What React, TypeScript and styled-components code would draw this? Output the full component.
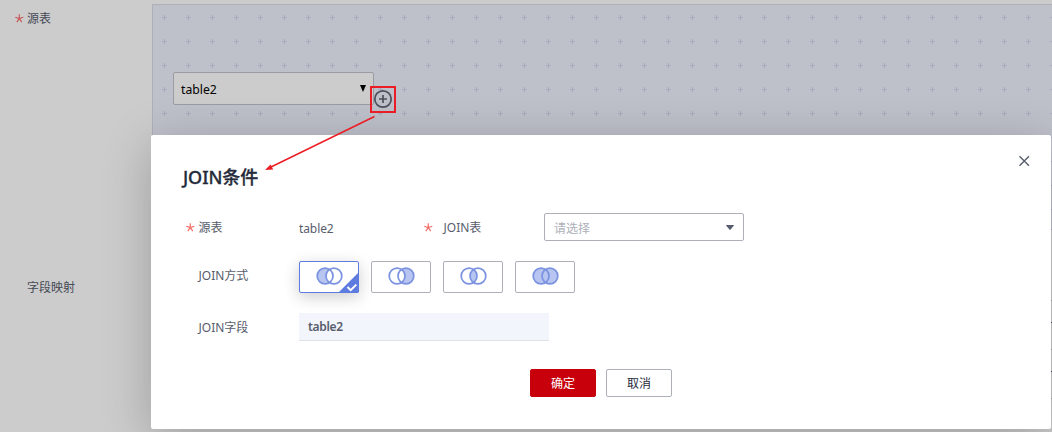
import React from 'react';
import styled, { createGlobalStyle, css } from 'styled-components';

const GlobalStyle = createGlobalStyle`
  * { box-sizing: border-box; }
  html, body { margin: 0; height: 432px; overflow: hidden; }
  body {
    background: #cccccc;
    font-family: 'Noto Sans', 'Noto Sans CJK SC', sans-serif;
    font-size: 12px;
    color: #575d6c;
  }
  button { font: inherit; }
`;

const Page = styled.div`
  position: relative;
  width: 1052px;
  height: 432px;
  overflow: hidden;
`;

const PageRow = styled.section<{ $height: number }>`
  display: grid;
  grid-template-columns: 152px 1fr;
  height: ${p => p.$height}px;
`;

const PageLabel = styled.div<{ $top: number; $left?: number }>`
  display: flex;
  padding: ${p => p.$top}px 0 0 ${p => p.$left ?? 15}px;
  line-height: 18px;
  color: #464a56;
`;

const Star = styled.span<{ $dim?: boolean }>`
  flex: none;
  display: flex;
  align-items: center;
  width: 12px;
  height: 17px;
  color: ${p => (p.$dim ? '#c85a5a' : '#f66f6a')};
`;

const Canvas = styled.div`
  position: relative;
  margin-top: 4px;
  border: 1px solid #adb0b7;
  border-right: 0;
  background: #bec1ca;
  overflow: hidden;
`;

const Grid = styled.svg`
  position: absolute;
  inset: 0;
  width: 100%;
  height: 100%;
`;

const TableNode = styled.div`
  position: absolute;
  left: 20px;
  top: 67px;
  display: flex;
  align-items: center;
  justify-content: space-between;
  width: 201px;
  height: 33px;
  padding: 2px 7px 0 7px;
  border: 1px solid #9a9ca5;
  border-radius: 2px;
  background: #cccccc;
  color: #000;
  font-size: 12.2px;

  svg { margin-top: -2px; }
`;

const AddButton = styled.svg`
  position: absolute;
  left: 220px;
  top: 84px;
`;

const MappingTable = styled.div`
  display: grid;
  grid-auto-rows: 49px;
  align-content: start;
  padding-top: 22px;
`;

const MappingRow = styled.div<{ $marked?: boolean }>`
  display: flex;
  justify-content: flex-end;
  border-bottom: 1px solid #a4a4a4;
  &::after {
    content: '';
    width: 1px;
    height: 1px;
    margin-top: 21px;
    background: ${p => (p.$marked ? '#464a56' : 'transparent')};
  }
`;

const Dialog = styled.div`
  position: absolute;
  left: 151px;
  top: 135px;
  width: 900px;
  height: 294px;
  padding: 29px 31px 0;
  border-radius: 2px;
  background: #fff;
  box-shadow: 0 10px 50px rgba(0, 0, 0, 0.23);
`;

const Header = styled.header`
  display: flex;
  justify-content: space-between;
  height: 49px;
`;

const Title = styled.h2`
  margin: 0 0 0 1px;
  font-size: 18px;
  line-height: 26px;
  letter-spacing: -0.1px;
  font-weight: 500;
  color: #252b3a;
  -webkit-text-stroke: 0.3px currentColor;
`;

const Close = styled.button`
  width: 12px;
  height: 12px;
  margin: -9px -10px 0 0;
  padding: 0;
  border: 0;
  background: none;
  svg { display: block; }
`;

const FormRow = styled.div<{ $height: number }>`
  display: flex;
  align-items: flex-start;
  height: ${p => p.$height}px;
`;

const Label = styled.div<{ $width: number; $gap?: number }>`
  display: flex;
  gap: ${p => p.$gap ?? 0.5}px;
  flex: none;
  width: ${p => p.$width}px;
  padding: 6px 0 0 4px;
  line-height: 18px;
`;

const Value = styled.div`
  width: 121px;
  padding-top: 7px;
  line-height: 18px;
  letter-spacing: -0.1px;
`;

const Select = styled.div`
  display: flex;
  align-items: center;
  justify-content: space-between;
  width: 200px;
  height: 28px;
  padding: 1px 9px 0;
  border: 1px solid #adb0b8;
  border-radius: 2px;
  color: #adb0b8;
`;

const Options = styled.div`
  display: flex;
  gap: 12px;
`;

const Option = styled.button<{ $selected?: boolean }>`
  position: relative;
  display: flex;
  justify-content: center;
  width: 60px;
  height: 32px;
  padding: 4px 0 0;
  border: 1px solid #adb0b8;
  border-radius: 2px;
  background: #fff;
  ${p => p.$selected && css`
    border-color: #5e7ce0;
    box-shadow: 0 4px 16px rgba(0, 0, 0, 0.2);
  `}
`;

const Tick = styled.svg`
  position: absolute;
  right: -1px;
  bottom: -1px;
`;

const Field = styled.div`
  width: 250px;
  height: 28px;
  padding-left: 9px;
  border-bottom: 1px solid #dfe1e6;
  background: #f2f5fc;
  font-weight: 600;
  letter-spacing: -0.3px;
  line-height: 28px;
`;

const Footer = styled.footer`
  display: flex;
  justify-content: center;
  gap: 10px;
`;

const Button = styled.button<{ $primary?: boolean }>`
  width: 66px;
  height: 28px;
  padding: 0;
  border: 1px solid ${p => (p.$primary ? '#c7000b' : '#adb0b8')};
  border-radius: 2px;
  background: ${p => (p.$primary ? '#c7000b' : '#fff')};
  color: ${p => (p.$primary ? '#fff' : '#252b3a')};
`;

const Annotation = styled.svg`
  position: absolute;
  left: 0;
  top: 0;
  pointer-events: none;
`;

function Required({ dim }: { dim?: boolean }) {
  return (
    <Star $dim={dim}>
      <svg width="9" height="9" viewBox="0 0 9 9" fill="none" stroke="currentColor" strokeWidth="1.2">
        <path d="M4.3 0.3V4.6M0.3 3.3L4.3 4.6L8.3 3.3M1.8 8.2L4.3 4.6L6.8 8.2" />
      </svg>
    </Star>
  );
}

type Join = 'left' | 'right' | 'inner' | 'full';

function JoinIcon({ kind }: { kind: Join }) {
  const fill = '#b7c5f0';
  const lens = 'M13.5 3.44A7.9 7.9 0 0 1 13.5 16.56A7.9 7.9 0 0 1 13.5 3.44Z';
  return (
    <svg width="27" height="20" viewBox="0 0 27 20" fill="none">
      {(kind === 'left' || kind === 'full') && <circle cx="9.1" cy="10" r="7.9" fill={fill} />}
      {(kind === 'right' || kind === 'full') && <circle cx="17.9" cy="10" r="7.9" fill={fill} />}
      {(kind === 'left' || kind === 'right') && <path d={lens} fill="#fff" />}
      {kind === 'inner' && <path d={lens} fill={fill} />}
      <g stroke="#7b92e0" strokeWidth="1.7">
        <circle cx="9.1" cy="10" r="7.9" />
        <circle cx="17.9" cy="10" r="7.9" />
      </g>
    </svg>
  );
}

const joins: Join[] = ['left', 'right', 'inner', 'full'];

export default function App() {
  return (
    <>
      <GlobalStyle />
      <Page>
        <PageRow $height={230}>
          <PageLabel $top={10}>
            <Required dim />
            源表
          </PageLabel>
          <Canvas>
            <Grid>
              <defs>
                <pattern id="plus" width="24" height="24" patternUnits="userSpaceOnUse">
                  <path d="M9 12.5H14M11.5 10V15" stroke="#a8abbd" />
                </pattern>
              </defs>
              <rect width="100%" height="100%" fill="url(#plus)" />
            </Grid>
            <TableNode>
              table2
              <svg width="6" height="7" viewBox="0 0 6 7">
                <path d="M0 0H6L3 7Z" fill="#000" />
              </svg>
            </TableNode>
            <AddButton width="20" height="20" viewBox="0 0 20 20" fill="none" stroke="#4c505c" strokeWidth="1.7">
              <circle cx="10" cy="10" r="8.2" />
              <path d="M6 10H14M10 6V14" />
            </AddButton>
          </Canvas>
        </PageRow>
        <PageRow $height={202}>
          <PageLabel $top={49} $left={27}>字段映射</PageLabel>
          <MappingTable>
            <MappingRow />
            <MappingRow $marked />
            <MappingRow $marked />
          </MappingTable>
        </PageRow>

        <Dialog role="dialog">
          <Header>
            <Title>JOIN条件</Title>
            <Close aria-label="close">
              <svg width="12" height="12" viewBox="0 0 12 12" fill="none" stroke="#575d6c" strokeWidth="1.4">
                <path d="M1.5 1.3L11 10.7M11 1.3L1.5 10.7" />
              </svg>
            </Close>
          </Header>
          <FormRow $height={48}>
            <Label $width={117}>
              <Required />
              源表
            </Label>
            <Value>table2</Value>
            <Label $width={124} $gap={7.5}>
              <Required />
              JOIN表
            </Label>
            <Select>
              请选择
              <svg width="8" height="5" viewBox="0 0 8 5">
                <path d="M0.5 0H7.5Q8.2 0 7.7 0.7L4.6 4.6Q4 5.2 3.4 4.6L0.3 0.7Q-0.2 0 0.5 0Z" fill="#575d6c" />
              </svg>
            </Select>
          </FormRow>
          <FormRow $height={52}>
            <Label $width={117}>
              <Star />
              JOIN方式
            </Label>
            <Options>
              {joins.map((kind, i) => (
                <Option key={kind} $selected={i === 0} aria-label={kind}>
                  <JoinIcon kind={kind} />
                  {i === 0 && (
                    <Tick width="21" height="21" viewBox="0 0 21 21" fill="none">
                      <path d="M21 0V19Q21 21 19 21H0Z" fill="#5e7ce0" />
                      <path d="M9.5 15L12.7 18.2L18.3 12.6" stroke="#fff" strokeWidth="2" />
                    </Tick>
                  )}
                </Option>
              ))}
            </Options>
          </FormRow>
          <FormRow $height={56}>
            <Label $width={117}>
              <Star />
              JOIN字段
            </Label>
            <Field>table2</Field>
          </FormRow>
          <Footer>
            <Button $primary>确定</Button>
            <Button>取消</Button>
          </Footer>
        </Dialog>

        <Annotation width="1052" height="432" fill="none">
          <rect x="371" y="87" width="24" height="25" stroke="#ec1c24" strokeWidth="2" />
          <path d="M374.5 116.5L271 167" stroke="#ec1c24" strokeWidth="1.4" />
          <path d="M265 170L270.6 164.4L273.2 169.5Z" fill="#ec1c24" />
        </Annotation>
      </Page>
    </>
  );
}
